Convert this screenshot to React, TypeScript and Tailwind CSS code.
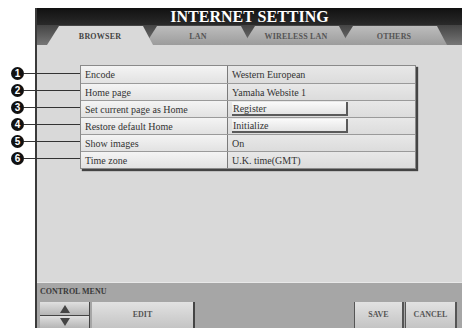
const rows = [
  { label: "Encode", value: "Western European" },
  { label: "Home page", value: "Yamaha Website 1" },
  { label: "Set current page as Home", value: "Register", button: true },
  { label: "Restore default Home", value: "Initialize", button: true },
  { label: "Show images", value: "On" },
  { label: "Time zone", value: "U.K. time(GMT)" },
];

const tabs = ["BROWSER", "LAN", "WIRELESS LAN", "OTHERS"];

function Tab({ label, active, first }: { label: string; active?: boolean; first?: boolean }) {
  return (
    <div
      className={`relative flex h-[19px] w-[106px] items-center justify-center pt-[2px] text-[8px] font-bold tracking-wide [clip-path:polygon(12px_0,calc(100%-10px)_0,100%_100%,0_100%)] ${
        first ? "" : "-ml-[8px]"
      } ${active ? "z-10 bg-[#d9d9d9] text-[#444]" : "bg-gradient-to-b from-[#bdbdbd] to-[#9c9c9c] text-[#555]"}`}
    >
      {label}
    </div>
  );
}

function Row({ label, value, button }: { label: string; value: string; button?: boolean }) {
  return (
    <div className="flex h-[17px] border-t border-[#9a9a9a] first:border-t-0">
      <div className="flex w-[147px] items-center border-r border-[#7a7a7a] bg-gradient-to-b from-[#f4f4f4] to-[#e2e2e2] pl-[4px]">
        {label}
      </div>
      <div className="flex flex-1 items-center bg-gradient-to-b from-[#e8e8e8] to-[#dcdcdc] pl-[4px]">
        {button ? (
          <div className="flex h-[14px] w-[116px] items-center border-b-2 border-r-2 border-[#5a5a5a] bg-gradient-to-b from-[#fafafa] to-[#e4e4e4] pl-[1px]">
            {value}
          </div>
        ) : (
          value
        )}
      </div>
    </div>
  );
}

function Callout({ n }: { n: number }) {
  return (
    <div className="flex h-[17px] items-center">
      <div className="flex h-[13px] w-[13px] items-center justify-center rounded-full bg-[#111] text-[10px] font-bold leading-none text-white [font-family:'Liberation_Sans',sans-serif]">
        {n}
      </div>
      <div className="h-[1px] w-[56px] bg-[#333]" />
    </div>
  );
}

export default function App() {
  return (
    <div className="relative h-[328px] w-[462px] overflow-hidden bg-white text-[10px] text-[#333] [font-family:'Liberation_Serif',serif]">
      <div className="ml-[35px] mt-[8px] flex h-[320px] flex-col border-l-2 border-[#3a3a3a]">
        <div className="flex h-[17px] items-center justify-center bg-gradient-to-b from-[#111] to-[#2a2a2a] text-[16px] font-bold leading-none text-white">
          INTERNET SETTING
        </div>
        <div className="flex h-[20px] items-end bg-gradient-to-b from-[#444] to-[#777] pl-[10px]">
          {tabs.map((t, i) => (
            <Tab key={t} label={t} active={i === 0} first={i === 0} />
          ))}
        </div>
        <div className="flex-1 bg-[#d9d9d9] pl-[43px] pt-[20px]">
          <div className="w-[336px] border border-[#8a8a8a] shadow-[2px_2px_1px_#444]">
            {rows.map((r) => (
              <Row key={r.label} {...r} />
            ))}
          </div>
        </div>
        <div className="flex h-[46px] flex-col border-t border-[#e8e8e8] bg-[#a6a6a6] px-[3px] pt-[5px]">
          <div className="text-[8px] font-bold leading-none text-[#3a3a3a]">CONTROL MENU</div>
          <div className="mt-[6px] flex flex-1">
            <div className="flex w-[50px] flex-col">
              <div className="flex h-[14px] items-center justify-center border-b border-r border-[#444] bg-gradient-to-b from-[#e0e0e0] to-[#b5b5b5]">
                <svg width="10" height="8" viewBox="0 0 10 8">
                  <path d="M5 0 L10 8 L0 8 Z" fill="#444" />
                </svg>
              </div>
              <div className="flex flex-1 items-start justify-center border-r border-[#444] bg-gradient-to-b from-[#e0e0e0] to-[#b5b5b5] pt-[2px]">
                <svg width="10" height="8" viewBox="0 0 10 8">
                  <path d="M0 0 L10 0 L5 8 Z" fill="#444" />
                </svg>
              </div>
            </div>
            <div className="ml-[2px] flex w-[103px] items-center justify-center border-r-2 border-[#444] bg-gradient-to-b from-[#e2e2e2] to-[#c4c4c4] text-[8px] font-bold text-[#555]">
              EDIT
            </div>
            <div className="flex-1" />
            <div className="flex w-[50px] items-center justify-center border-l border-r-2 border-[#555] bg-gradient-to-b from-[#e2e2e2] to-[#c4c4c4] text-[8px] font-bold text-[#555]">
              SAVE
            </div>
            <div className="ml-[1px] mr-[2px] flex w-[52px] items-center justify-center border-l border-r-2 border-[#555] bg-gradient-to-b from-[#e2e2e2] to-[#c4c4c4] text-[8px] font-bold text-[#555]">
              CANCEL
            </div>
          </div>
        </div>
      </div>
      <div className="absolute left-[11px] top-[65px] flex flex-col">
        {rows.map((r, i) => (
          <Callout key={r.label} n={i + 1} />
        ))}
      </div>
    </div>
  );
}
